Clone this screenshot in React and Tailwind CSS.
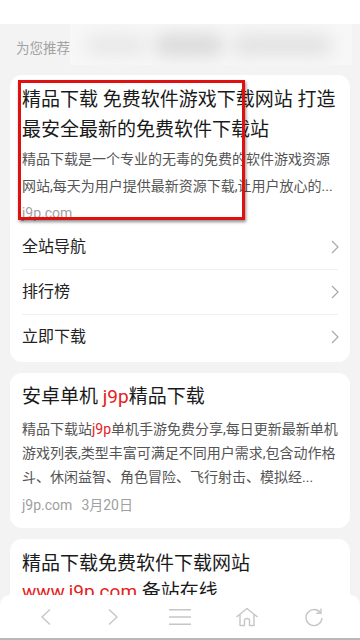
export default function App() {
  const Chevron = () => (
    <svg width="8" height="14" viewBox="0 0 8 14" className="mr-[3px]">
      <path d="M1 1 L7 7 L1 13" fill="none" stroke="#a8a8a8" strokeWidth="1.2" />
    </svg>
  );
  return (
    <div className="relative w-[360px] h-[640px] overflow-hidden bg-[#f3f3f3] font-['Roboto','Noto_Sans_CJK_SC',sans-serif]">
      <div className="h-[24px] bg-white" />
      <div className="flex h-[47px] items-start">
        <div className="w-[70px] pl-[16px] pt-[14px] text-[13.5px] leading-[20px] text-[#a3a3a3]">为您推荐</div>
        <div className="flex h-[41px] w-[282px] items-center gap-[8px] overflow-hidden bg-[#f7f7f7] px-[16px]">
          <div className="h-[20px] w-[60px] rounded-full bg-[#e8e8e8] blur-[8px]" />
          <div className="h-[24px] w-[70px] rounded-full bg-[#dcdcdc] blur-[8px]" />
          <div className="h-[22px] w-[100px] rounded-full bg-[#e3e3e3] blur-[8px]" />
        </div>
      </div>

      <div className="mx-[10px] mt-[4px] rounded-[12px] bg-white pl-[12px] pr-[8px] pt-[10px] pb-[3px]">
        <div className="text-[19px] leading-[30px] text-[#1a1a1a]">精品下载 免费软件游戏下载网站 打造最安全最新的免费软件下载站</div>
        <div className="mt-[1px] text-[14px] leading-[27px] text-[#555]">精品下载是一个专业的无毒的免费的软件游戏资源网站,每天为用户提供最新资源下载,让用户放心的...</div>
        <div className="mt-[3px] text-[14px] leading-[20px] text-[#a0a0a0]">j9p.com</div>
        <div className="mt-[2px]">
          <div className="flex h-[44px] items-center justify-between">
            <span className="text-[16px] text-[#222]">全站导航</span>
            <Chevron />
          </div>
          <div className="mr-[4px] h-px bg-[#efefef]" />
          <div className="flex h-[44px] items-center justify-between">
            <span className="text-[16px] text-[#222]">排行榜</span>
            <Chevron />
          </div>
          <div className="mr-[4px] h-px bg-[#efefef]" />
          <div className="flex h-[44px] items-center justify-between">
            <span className="text-[16px] text-[#222]">立即下载</span>
            <Chevron />
          </div>
        </div>
      </div>

      <div className="mx-[10px] mt-[11px] rounded-[12px] bg-white pl-[12px] pr-[8px] pt-[9px] pb-[13px]">
        <div className="text-[19px] leading-[30px] text-[#1a1a1a]">安卓单机 <span className="text-[#e5211d]">j9p</span>精品下载</div>
        <div className="mt-[5px] text-[14px] leading-[24px] text-[#555]">精品下载站<span className="text-[#e5211d]">j9p</span>单机手游免费分享,每日更新最新单机游戏列表,类型丰富可满足不同用户需求,包含动作格斗、休闲益智、角色冒险、飞行射击、模拟经...</div>
        <div className="mt-[6px] flex gap-[9px] text-[14px] leading-[20px] text-[#a0a0a0]">
          <span>j9p.com</span>
          <span>3月20日</span>
        </div>
      </div>

      <div className="mx-[10px] mt-[11px] rounded-[12px] bg-white pl-[12px] pr-[8px] pt-[11px] pb-[13px]">
        <div className="text-[19px] leading-[28px] text-[#1a1a1a]">精品下载免费软件下载网站 <span className="text-[#e5211d]">www.j9p.com</span> 备站在线</div>
      </div>

      <div className="absolute bottom-0 left-0 grid h-[45px] w-full grid-cols-5 rounded-t-[10px] border-b-2 border-[#b8b8b8] bg-white px-[13px]">
        <div className="flex items-center justify-center">
          <svg width="12" height="18" viewBox="0 0 12 18">
            <path d="M10 1.5 L2 9 L10 16.5" fill="none" stroke="#c6c6c6" strokeWidth="1.4" />
          </svg>
        </div>
        <div className="flex items-center justify-center">
          <svg width="12" height="18" viewBox="0 0 12 18">
            <path d="M2 1.5 L10 9 L2 16.5" fill="none" stroke="#c6c6c6" strokeWidth="1.4" />
          </svg>
        </div>
        <div className="flex items-center justify-center">
          <svg width="24" height="18" viewBox="0 0 24 18">
            <path d="M1 1.8 H23 M1 9 H23 M1 16.2 H23" fill="none" stroke="#c6c6c6" strokeWidth="1.4" />
          </svg>
        </div>
        <div className="flex items-center justify-center">
          <svg width="24" height="20" viewBox="0 0 24 20">
            <path d="M1.5 10 L12 1.5 L22.5 10" fill="none" stroke="#c6c6c6" strokeWidth="1.4" strokeLinejoin="round" />
            <path d="M5 7.5 V18.5 H9.5 V12.5 Q12 10.5 14.5 12.5 V18.5 H19 V7.5" fill="none" stroke="#c6c6c6" strokeWidth="1.4" strokeLinejoin="round" />
          </svg>
        </div>
        <div className="flex items-center justify-center">
          <svg width="20" height="20" viewBox="0 0 20 20">
            <path d="M16.2 5.5 A8 8 0 1 0 18 11" fill="none" stroke="#c6c6c6" strokeWidth="1.4" />
            <path d="M17 1.5 V6.2 H12.3" fill="none" stroke="#c6c6c6" strokeWidth="1.4" />
          </svg>
        </div>
      </div>

      <div className="absolute left-[18px] top-[80px] h-[140px] w-[227px] border-[3px] border-[#e01010] shadow-[1px_2px_3px_rgba(0,0,0,0.45)]" />
    </div>
  );
}
